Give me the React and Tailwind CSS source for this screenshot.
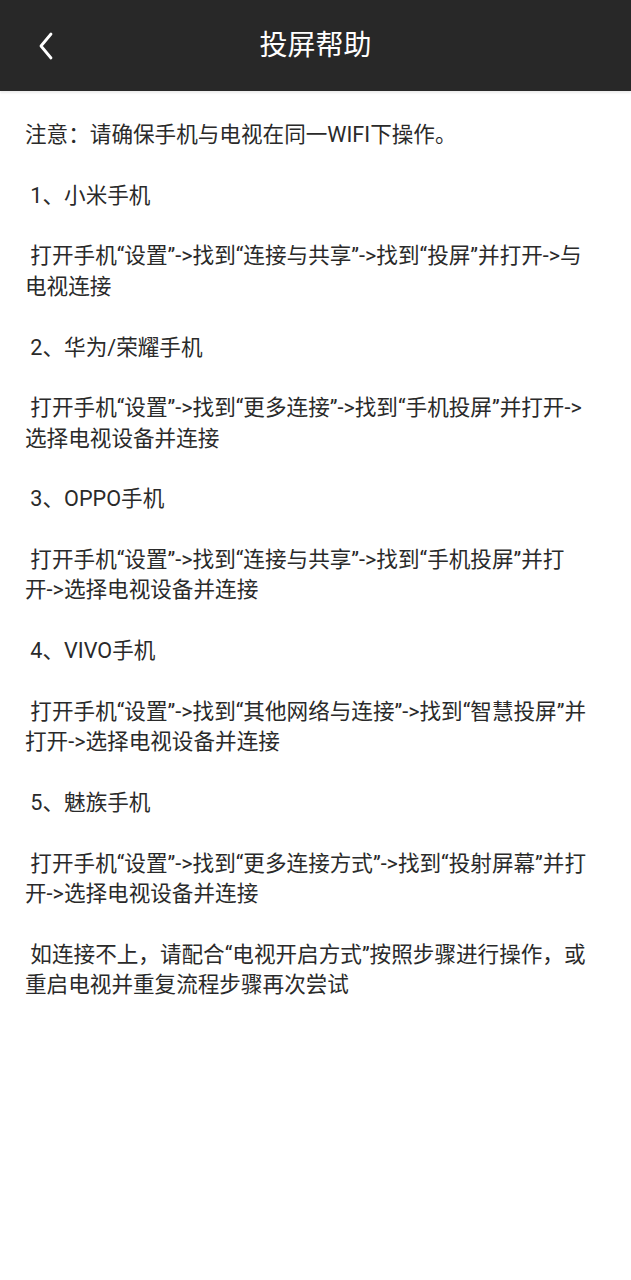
import React from 'react';

const sections = [
  { title: ' 1、小米手机', body: ' 打开手机“设置”->找到“连接与共享”->找到“投屏”并打开->与电视连接' },
  { title: ' 2、华为/荣耀手机', body: ' 打开手机“设置”->找到“更多连接”->找到“手机投屏”并打开->选择电视设备并连接' },
  { title: ' 3、OPPO手机', body: ' 打开手机“设置”->找到“连接与共享”->找到“手机投屏”并打开->选择电视设备并连接' },
  { title: ' 4、VIVO手机', body: ' 打开手机“设置”->找到“其他网络与连接”->找到“智慧投屏”并打开->选择电视设备并连接' },
  { title: ' 5、魅族手机', body: ' 打开手机“设置”->找到“更多连接方式”->找到“投射屏幕”并打开->选择电视设备并连接' },
];

// keep each "->" arrow together so lines never split it in half
function Steps({ text }) {
  const parts = text.split('->');
  return parts.map((p, i) => (
    <React.Fragment key={i}>
      {p}
      {i < parts.length - 1 && <span className="whitespace-nowrap">-&gt;</span>}
    </React.Fragment>
  ));
}

export default function App() {
  return (
    <div
      className="min-h-[1280px] bg-white"
      style={{ fontFamily: 'Roboto, "Noto Sans CJK SC", sans-serif' }}
    >
      {/* Title bar */}
      <header className="relative flex h-[91px] items-center justify-center bg-[#282828] shadow-[0_2px_2px_rgba(0,0,0,0.08)]">
        <button className="absolute left-[34px] top-1/2 -translate-y-1/2 p-1">
          <svg width="16" height="30" viewBox="0 0 16 30" fill="none">
            <path d="M13 3 L3 15 L13 27" stroke="white" strokeWidth="2.8" strokeLinecap="round" strokeLinejoin="round" />
          </svg>
        </button>
        <h1 className="text-[28px] font-normal text-white">投屏帮助</h1>
      </header>

      {/* Help text */}
      <div className="whitespace-pre-wrap pl-[25px] pr-[33px] pt-[29px] text-[21.6px] leading-[30.36px] text-[#2a2a2a]">
        <p>注意：请确保手机与电视在同一WIFI下操作。</p>
        {sections.map((s) => (
          <div key={s.title}>
            <p className="mt-[30.36px]">{s.title}</p>
            <p className="mt-[30.36px]">
              <Steps text={s.body} />
            </p>
          </div>
        ))}
        <p className="mt-[30.36px]"> 如连接不上，请配合“电视开启方式”按照步骤进行操作，或重启电视并重复流程步骤再次尝试</p>
      </div>
    </div>
  );
}
